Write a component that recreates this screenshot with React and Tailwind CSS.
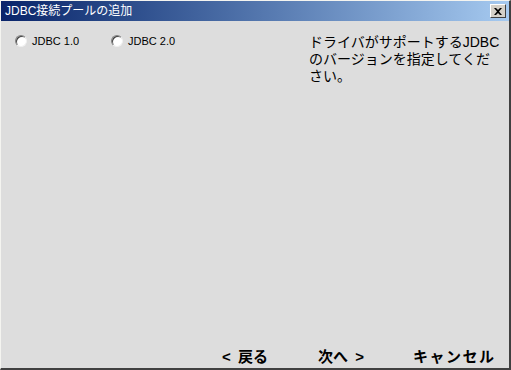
export default function App() {
  const jp = { fontFamily: '"Liberation Sans", "Noto Sans CJK JP", sans-serif' };
  return (
    <div className="w-[511px] h-[370px] bg-[#dddddd] flex flex-col border-l border-t border-[#f4f4f0] border-r-2 border-b-2 border-r-[#404040] border-b-[#404040] overflow-hidden" style={jp}>
      <div className="h-[20px] flex items-center justify-between bg-gradient-to-r from-[#0a246a] to-[#a6caf0] pl-[4px] pr-[3px]">
        <span className="text-white text-[12px] leading-none">JDBC接続プールの追加</span>
        <div className="w-[16px] h-[14px] bg-[#d4d0c8] border border-t-white border-l-white border-r-[#404040] border-b-[#404040] flex items-center justify-center">
          <svg width="8" height="7" viewBox="0 0 8 7">
            <path d="M0 0 L2 0 L4 2 L6 0 L8 0 L5 3.5 L8 7 L6 7 L4 5 L2 7 L0 7 L3 3.5 Z" fill="#000" />
          </svg>
        </div>
      </div>
      <div className="flex-1 flex">
        <div className="flex-1 flex items-start gap-[32px] pl-[14px] pt-[12px]">
          <label className="flex items-center gap-[5px] text-[11px] text-black">
            <span className="w-[12px] h-[12px] rounded-full bg-white border border-t-[#808080] border-l-[#808080] border-r-[#f0f0f0] border-b-[#f0f0f0] shadow-[inset_1px_1px_0_#404040]" />
            JDBC 1.0
          </label>
          <label className="flex items-center gap-[5px] text-[11px] text-black">
            <span className="w-[12px] h-[12px] rounded-full bg-white border border-t-[#808080] border-l-[#808080] border-r-[#f0f0f0] border-b-[#f0f0f0] shadow-[inset_1px_1px_0_#404040]" />
            JDBC 2.0
          </label>
        </div>
        <div className="w-[200px] pt-[13px] text-[14px] leading-[17px] text-black">
          ドライバがサポートするJDBC<br />のバージョンを指定してくだ<br />さい。
        </div>
      </div>
      <div className="h-[26px] flex items-start justify-end pr-[12px] pt-[6px] text-[15px] leading-[18px] font-bold text-black whitespace-nowrap">
        <span className="w-[46px] flex justify-between"><span>&lt;</span><span>戻る</span></span>
        <span className="w-[46px] ml-[50px] flex justify-between"><span>次へ</span><span>&gt;</span></span>
        <span className="w-[84px] ml-[49px] tracking-[1.5px]">キャンセル</span>
      </div>
    </div>
  );
}
